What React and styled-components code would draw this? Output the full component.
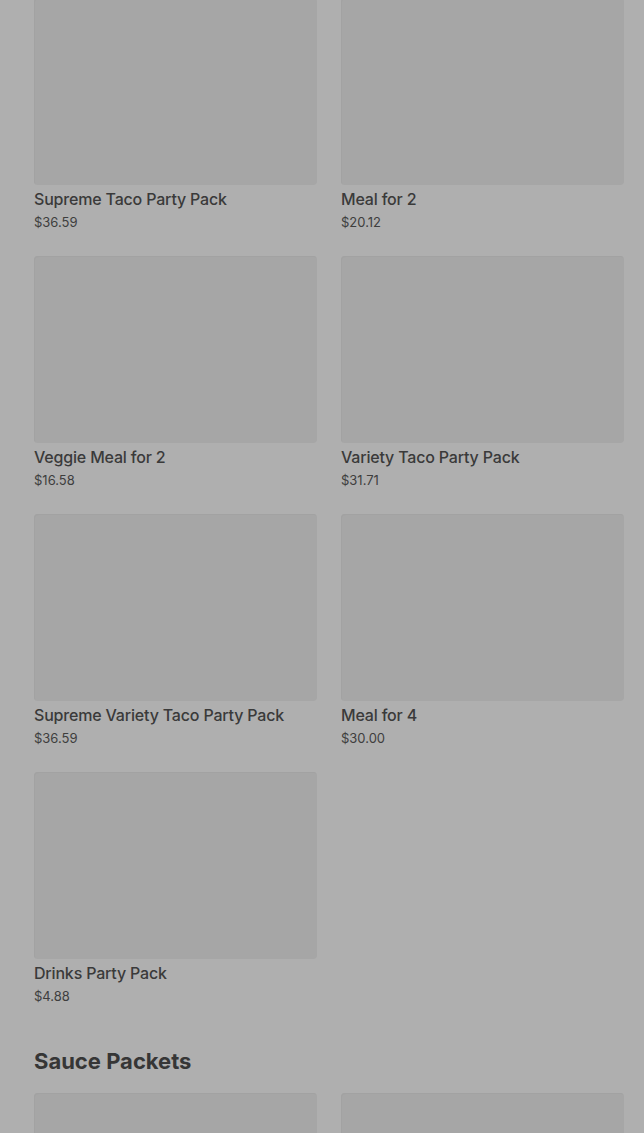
import React from 'react'
import styled, { createGlobalStyle } from 'styled-components'

const GlobalStyle = createGlobalStyle`
  html, body {
    margin: 0;
    padding: 0;
    background: #afafaf;
  }
  body {
    font-family: Inter, "Open Sans", "Liberation Sans", sans-serif;
    color: #3a3a3a;
  }
`

const Page = styled.main`
  padding: 0 20px 40px 34px;
  margin-top: -2px;
`

const Section = styled.section`
  & + & {
    margin-top: 41px;
  }
`

const SectionTitle = styled.h2`
  margin: 0 0 18px;
  font-size: 22px;
  line-height: 28px;
  font-weight: 700;
  letter-spacing: 0;
  color: #363636;
`

const Grid = styled.div`
  display: grid;
  grid-template-columns: 283px 283px;
  column-gap: 24px;
  row-gap: 24px;
`

const Card = styled.div`
  display: flex;
  flex-direction: column;
`

const Thumb = styled.div`
  height: 187px;
  background: #a6a6a6;
  border-radius: 4px;
  box-shadow: inset 1px 1px 0 #a2a2a2;
`

const Name = styled.div`
  margin-top: 2px;
  font-size: 16px;
  line-height: 24px;
  font-weight: 500;
  letter-spacing: -0.18px;
  color: #3a3a3a;
  white-space: nowrap;
`

const Price = styled.div`
  margin-top: 1px;
  font-size: 13px;
  line-height: 20px;
  color: #3e3e3e;
`

const partyPacks = [
  { name: 'Supreme Taco Party Pack', price: '$36.59' },
  { name: 'Meal for 2', price: '$20.12' },
  { name: 'Veggie Meal for 2', price: '$16.58' },
  { name: 'Variety Taco Party Pack', price: '$31.71' },
  { name: 'Supreme Variety Taco Party Pack', price: '$36.59' },
  { name: 'Meal for 4', price: '$30.00' },
  { name: 'Drinks Party Pack', price: '$4.88' }
]

function App() {
  return (
    <>
      <GlobalStyle />
      <Page>
        <Section>
          <Grid>
            {partyPacks.map(item => (
              <Card key={item.name}>
                <Thumb />
                <Name>{item.name}</Name>
                <Price>{item.price}</Price>
              </Card>
            ))}
          </Grid>
        </Section>
        <Section>
          <SectionTitle>Sauce Packets</SectionTitle>
          <Grid>
            <Card><Thumb /></Card>
            <Card><Thumb /></Card>
          </Grid>
        </Section>
      </Page>
    </>
  )
}

export default App
